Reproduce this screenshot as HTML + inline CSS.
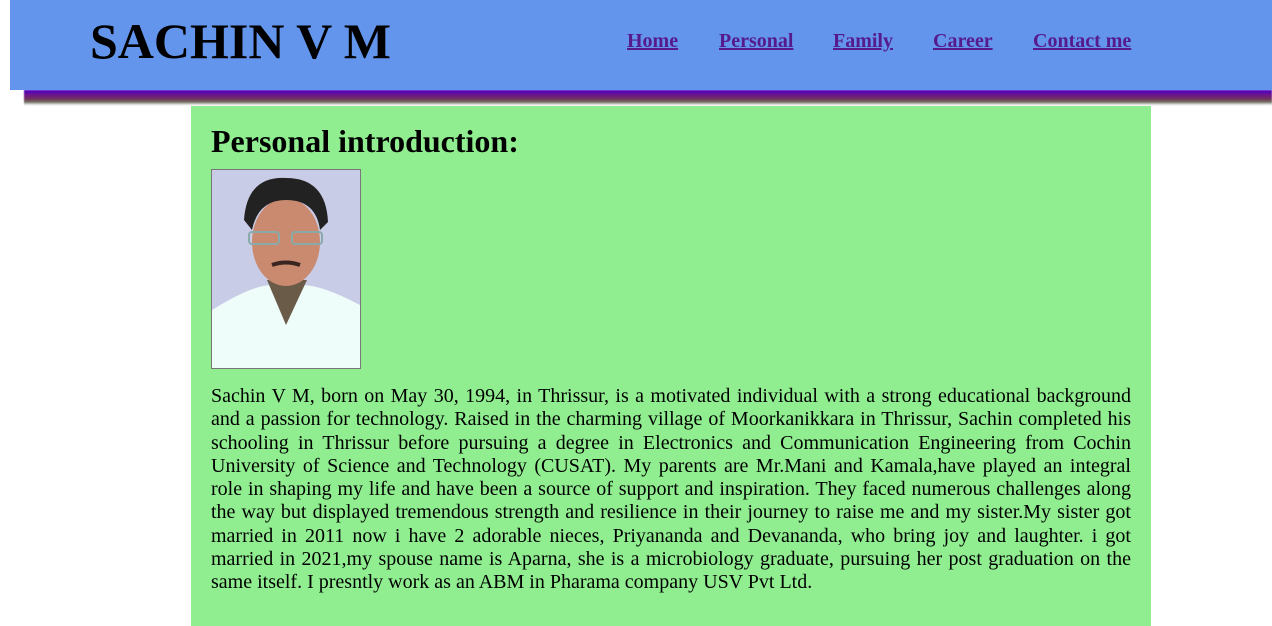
<!DOCTYPE html>
<html><head><style>
body{margin:0;width:1272px;height:611px;overflow:hidden;background:#fff;font-family:"Liberation Serif",serif;position:relative}
.hdr{position:absolute;left:10px;top:0;width:1262px;height:90px;background:#6495ed;z-index:2}
.shadow{position:absolute;left:24px;top:90px;width:1248px;height:16px;background:linear-gradient(#4600c8 0%,#6a0f98 25%,#733060 55%,#707060 75%,rgba(150,150,150,.3) 90%,rgba(255,255,255,0) 100%);z-index:1;filter:blur(.6px)}
h1{position:absolute;left:80px;top:13px;margin:0;font-size:50px;font-weight:bold;line-height:56px;color:#000}
.nav a{position:absolute;top:29px;font-size:20px;font-weight:bold;color:#551a8b;text-decoration:underline;line-height:24px}
.main{position:absolute;left:191px;top:106px;width:960px;height:520px;background:#90ee90}
h2{position:absolute;left:20px;top:17px;margin:0;font-size:32px;font-weight:bold;line-height:36px}
.photo{position:absolute;left:20px;top:63px;width:148px;height:198px;border:1px solid #777;background:#c9cce6;overflow:hidden}
p{position:absolute;left:20px;top:279px;width:920px;margin:0;font-size:20px;line-height:23.3px;text-align:justify}
</style></head><body>
<div class="hdr"><h1>SACHIN V M</h1>
<div class="nav"><a style="left:617px">Home</a><a style="left:709px">Personal</a><a style="left:823px">Family</a><a style="left:923px">Career</a><a style="left:1023px">Contact me</a></div></div>
<div class="shadow"></div>
<div class="main">
<h2>Personal introduction:</h2>
<div class="photo"><svg width="148" height="198" viewBox="0 0 148 198">
<path d="M0 140 Q40 115 60 115 L90 115 Q110 115 148 135 L148 198 L0 198Z" fill="#eefcfa"/>
<path d="M55 110 L74 155 L95 110Z" fill="#6a5a48"/>
<ellipse cx="74" cy="72" rx="34" ry="44" fill="#c98a70"/>
<path d="M32 50 Q35 6 74 8 Q114 8 116 52 L108 60 Q104 30 74 30 Q46 30 40 60Z" fill="#222"/>
<rect x="37" y="62" width="30" height="12" rx="3" fill="none" stroke="#88aaa8" stroke-width="2"/>
<rect x="80" y="62" width="30" height="12" rx="3" fill="none" stroke="#88aaa8" stroke-width="2"/>
<path d="M60 95 Q74 90 88 95" stroke="#3a2520" stroke-width="4" fill="none"/>
</svg></div>
<p>Sachin V M, born on May 30, 1994, in Thrissur, is a motivated individual with a strong educational background and a passion for technology. Raised in the charming village of Moorkanikkara in Thrissur, Sachin completed his schooling in Thrissur before pursuing a degree in Electronics and Communication Engineering from Cochin University of Science and Technology (CUSAT). My parents are Mr.Mani and Kamala,have played an integral role in shaping my life and have been a source of support and inspiration. They faced numerous challenges along the way but displayed tremendous strength and resilience in their journey to raise me and my sister.My sister got married in 2011 now i have 2 adorable nieces, Priyananda and Devananda, who bring joy and laughter. i got married in 2021,my spouse name is Aparna, she is a microbiology graduate, pursuing her post graduation on the same itself. I presntly work as an ABM in Pharama company USV Pvt Ltd.</p>
</div>
</body></html>
